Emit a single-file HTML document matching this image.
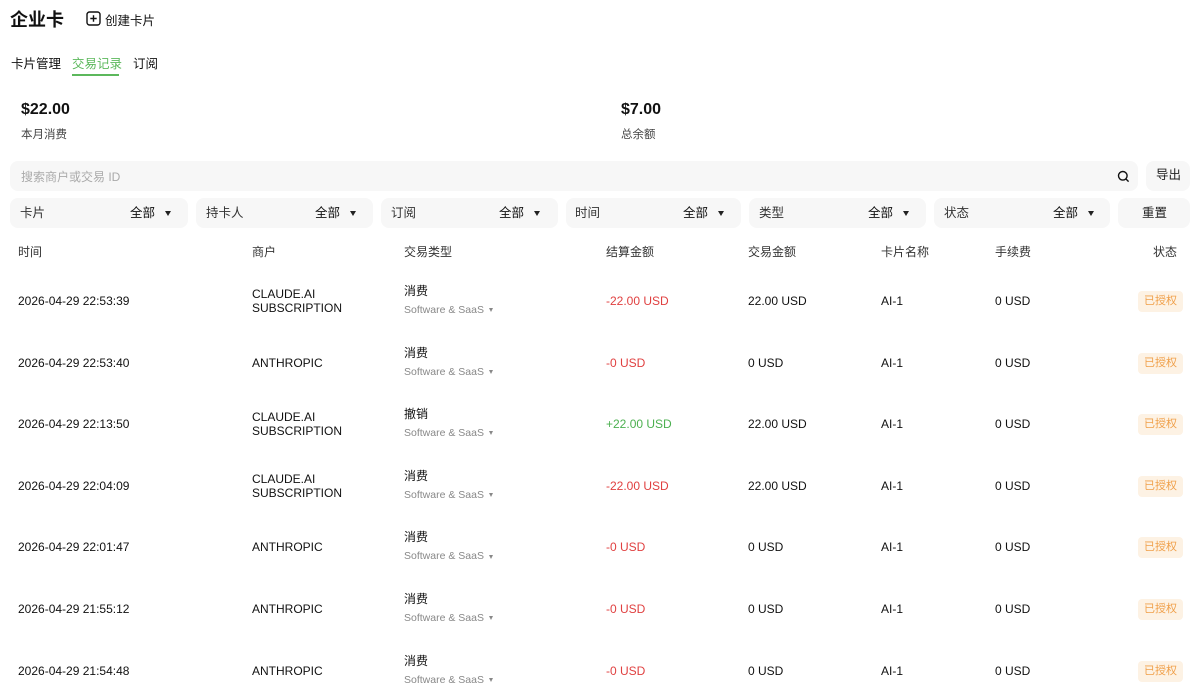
<!DOCTYPE html>
<html><head><meta charset="utf-8"><style>
*{margin:0;padding:0;box-sizing:border-box}
body{width:1200px;height:699px;overflow:hidden;background:#fff;font-family:"Liberation Sans","Noto Sans CJK SC",sans-serif;color:#111;position:relative}
.a{position:absolute;white-space:nowrap}
.box{position:absolute;background:#f7f7f7;border-radius:8px}
.f{font-size:12.5px;color:#333;line-height:16px}
.tri{display:inline-block;width:0;height:0;border-left:3.5px solid transparent;border-right:3.5px solid transparent;border-top:5px solid #222;vertical-align:middle;margin-left:10px}
.h{font-size:12px;color:#333;top:243px}
.c{font-size:12px;color:#111}
.sub{font-size:10.5px;color:#888}
.sub i{display:inline-block;width:0;height:0;border-left:2.5px solid transparent;border-right:2.5px solid transparent;border-top:4px solid #888;margin-left:5px;vertical-align:middle}
.badge{position:absolute;left:1138px;width:45px;height:21px;background:#fdf2e4;color:#f0a04a;font-size:11px;border-radius:4px;text-align:center;line-height:21px}
</style></head><body>
<div class="a" style="left:10px;top:6px;font-size:18px;font-weight:bold">企业卡</div>
<svg class="a" style="left:86px;top:11px" width="15" height="15" viewBox="0 0 15 15"><rect x="1" y="1" width="13" height="13" rx="2.5" fill="none" stroke="#111" stroke-width="1.4"/><path d="M7.5 4.3v6.4M4.3 7.5h6.4" stroke="#111" stroke-width="1.4"/></svg>
<div class="a" style="left:105px;top:10px;font-size:12.5px">创建卡片</div>
<div class="a" style="left:11px;top:53px;font-size:12.5px">卡片管理</div>
<div class="a" style="left:72px;top:53px;font-size:12.5px;color:#5cb85c">交易记录</div>
<div class="a" style="left:72px;top:74px;width:47px;height:2px;background:#5cb85c"></div>
<div class="a" style="left:133px;top:53px;font-size:12.5px">订阅</div>
<div class="a" style="left:21px;top:101px;font-size:16px;font-weight:bold">$22.00</div>
<div class="a" style="left:21px;top:126px;font-size:11.5px;color:#444">本月消费</div>
<div class="a" style="left:621px;top:101px;font-size:16px;font-weight:bold">$7.00</div>
<div class="a" style="left:621px;top:126px;font-size:11.5px;color:#444">总余额</div>
<div class="box" style="left:10px;top:161px;width:1128px;height:30px"></div>
<div class="a" style="left:21px;top:168px;font-size:12px;color:#aaa">搜索商户或交易 ID</div>
<svg class="a" style="left:1117px;top:170px" width="13" height="13" viewBox="0 0 13 13"><circle cx="5.8" cy="5.8" r="4.3" fill="none" stroke="#111" stroke-width="1.4"/><path d="M9 9l2.6 2.6" stroke="#111" stroke-width="1.4"/></svg>
<div class="box" style="left:1146px;top:161px;width:44px;height:30px"></div>
<div class="a f" style="left:1156px;top:167px;color:#222">导出</div>
<div class="box" style="left:10px;top:198px;width:178px;height:30px"></div><div class="a f" style="left:20px;top:205px">卡片</div><div class="a f" style="left:130px;top:205px;color:#111">全部<span class="tri"></span></div>
<div class="box" style="left:196px;top:198px;width:177px;height:30px"></div><div class="a f" style="left:206px;top:205px">持卡人</div><div class="a f" style="left:315px;top:205px;color:#111">全部<span class="tri"></span></div>
<div class="box" style="left:381px;top:198px;width:177px;height:30px"></div><div class="a f" style="left:391px;top:205px">订阅</div><div class="a f" style="left:499px;top:205px;color:#111">全部<span class="tri"></span></div>
<div class="box" style="left:566px;top:198px;width:175px;height:30px"></div><div class="a f" style="left:575px;top:205px">时间</div><div class="a f" style="left:683px;top:205px;color:#111">全部<span class="tri"></span></div>
<div class="box" style="left:749px;top:198px;width:177px;height:30px"></div><div class="a f" style="left:759px;top:205px">类型</div><div class="a f" style="left:868px;top:205px;color:#111">全部<span class="tri"></span></div>
<div class="box" style="left:934px;top:198px;width:176px;height:30px"></div><div class="a f" style="left:944px;top:205px">状态</div><div class="a f" style="left:1053px;top:205px;color:#111">全部<span class="tri"></span></div>
<div class="box" style="left:1118px;top:198px;width:72px;height:30px"></div><div class="a f" style="left:1142px;top:205px;color:#222">重置</div>
<div class="a h" style="left:18px">时间</div><div class="a h" style="left:252px">商户</div><div class="a h" style="left:404px">交易类型</div><div class="a h" style="left:606px">结算金额</div><div class="a h" style="left:748px">交易金额</div><div class="a h" style="left:881px">卡片名称</div><div class="a h" style="left:995px">手续费</div><div class="a h" style="left:1153px">状态</div>
<div id="rows"></div>
<script>
var d=[["2026-04-29 22:53:39","CLAUDE.AI<br>SUBSCRIPTION","消费","-22.00 USD","22.00 USD"],["2026-04-29 22:53:40","ANTHROPIC","消费","-0 USD","0 USD"],["2026-04-29 22:13:50","CLAUDE.AI<br>SUBSCRIPTION","撤销","+22.00 USD","22.00 USD"],["2026-04-29 22:04:09","CLAUDE.AI<br>SUBSCRIPTION","消费","-22.00 USD","22.00 USD"],["2026-04-29 22:01:47","ANTHROPIC","消费","-0 USD","0 USD"],["2026-04-29 21:55:12","ANTHROPIC","消费","-0 USD","0 USD"],["2026-04-29 21:54:48","ANTHROPIC","消费","-0 USD","0 USD"]];
var h="";d.forEach(function(r,i){var y=301+i*61.6;var two=r[1].indexOf("<br>")>0;
h+='<div class="a c" style="left:18px;top:'+(y-7)+'px">'+r[0]+'</div>';
h+='<div class="a c" style="left:252px;line-height:14px;top:'+(two?y-14:y-7)+'px">'+r[1]+'</div>';
h+='<div class="a c" style="left:404px;top:'+(y-19)+'px">'+r[2]+'</div>';
h+='<div class="a sub" style="left:404px;top:'+(y+3)+'px">Software &amp; SaaS<i></i></div>';
h+='<div class="a c" style="left:606px;top:'+(y-7)+'px;color:'+(r[3][0]=="+"?"#4cb050":"#e04040")+'">'+r[3]+'</div>';
h+='<div class="a c" style="left:748px;top:'+(y-7)+'px">'+r[4]+'</div>';
h+='<div class="a c" style="left:881px;top:'+(y-7)+'px">AI-1</div>';
h+='<div class="a c" style="left:995px;top:'+(y-7)+'px">0 USD</div>';
h+='<div class="badge" style="top:'+(y-10)+'px">已授权</div>';});
document.getElementById("rows").innerHTML=h;
</script>
</body></html>
